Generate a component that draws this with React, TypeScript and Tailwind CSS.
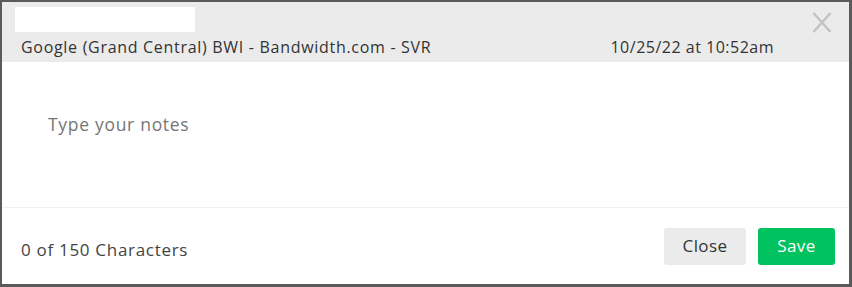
export default function App() {
  return (
    <div className="h-[287px] w-[852px] bg-[#5a5a5a] pb-[3px] pl-[2px] pr-[3px] pt-[2px] font-['Open_Sans',sans-serif]">
      <div className="flex h-full w-full flex-col bg-white">
        <div className="relative h-[60px] shrink-0 bg-[#ebebeb]">
          <div className="absolute left-[13px] top-[5px] h-[25px] w-[180px] bg-white" />
          <button className="absolute right-[17px] top-[10px] text-[#c2c2c2]">
            <svg width="20" height="21" viewBox="0 0 20 21" fill="none" stroke="currentColor" strokeWidth="2.4">
              <path d="M1.5 1 L18.5 20 M18.5 1 L1.5 20" />
            </svg>
          </button>
          <div className="absolute left-[19px] right-0 top-[35px] flex text-[16px] leading-[21px] tracking-[0.7px] text-[#333]">
            <span>Google (Grand Central) BWI - Bandwidth.com - SVR</span>
            <span className="ml-auto mr-[75px] tracking-[0.5px]">10/25/22 at 10:52am</span>
          </div>
        </div>
        <div className="h-[146px] shrink-0 border-b border-[#f0f0f0] px-[46px] pt-[50px]">
          <textarea
            placeholder="Type your notes"
            className="h-[80px] w-full resize-none text-[17.5px] leading-[24px] tracking-[0.7px] text-[#333] outline-none placeholder:text-[#767676]"
          />
        </div>
        <div className="flex flex-1 items-center justify-between pl-[19px] pr-[14px]">
          <span className="mt-[8px] text-[17px] tracking-[0.7px] text-[#444]">0 of 150 Characters</span>
          <div className="flex gap-[12px]">
            <button className="h-[37px] w-[82px] rounded-[3px] bg-[#ebebeb] text-[17px] tracking-[0.4px] text-[#333]">Close</button>
            <button className="h-[37px] w-[77px] rounded-[3px] bg-[#00c25e] text-[17px] tracking-[0.4px] text-white">Save</button>
          </div>
        </div>
      </div>
    </div>
  );
}
